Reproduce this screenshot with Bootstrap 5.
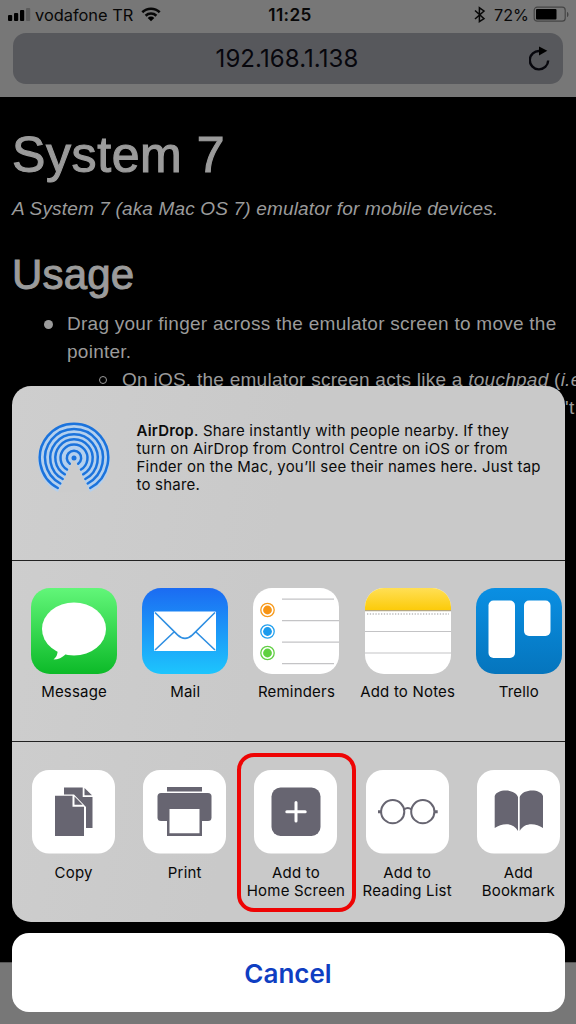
<!DOCTYPE html>
<html lang="en">
<head>
<meta charset="utf-8">
<meta name="viewport" content="width=device-width, initial-scale=1">
<title>System 7</title>
<link rel="stylesheet" href="https://cdn.jsdelivr.net/npm/bootstrap@5.3.0/dist/css/bootstrap.min.css">
<style>
  body { background: #777; font-family: Inter, sans-serif; color: #080808; }
  .phone { width: 576px; height: 1024px; background: #777; }
  .statusbar { height: 33px; font-size: 16.4px; line-height: 30px; padding: 0 6px 0 8px; }
  .statusbar > div { flex: 1 1 0; }
  .clock { font-weight: 600; font-size: 17.2px; letter-spacing: .35px; padding-left: 2px; }
  .percent { font-size: 16.2px; }
  .address { height: 51px; margin: 0 13px; border-radius: 13px; background: #57585c; color: #07070d; font-size: 24px; letter-spacing: .07px; padding-right: 12px; }
  .browser { height: 97px; }
  .doc { height: 865.5px; background: #000; color: #9b9b9b; font-family: "Liberation Sans", sans-serif; font-size: 19px; line-height: 28px; padding: 27.5px 0 0 12px; white-space: nowrap; border-bottom: 1px solid #555; }
  .doc h1 { font-size: 50px; line-height: 60px; font-weight: 400; -webkit-text-stroke: 1.1px #9b9b9b; letter-spacing: .6px; margin: 0; }
  .doc h2 { font-size: 42px; line-height: 50px; font-weight: 400; -webkit-text-stroke: 1px #9b9b9b; letter-spacing: .2px; margin: 27px 0 0; }
  .doc p { margin: 10px 0 0; font-style: italic; letter-spacing: .16px; }
  .doc ul { list-style: none; margin: 10.500px 0 0; padding: 0 0 0 55px; letter-spacing: .26px; }
  .doc ul ul { margin: 0; }
  .doc li { position: relative; }
  .doc li::before { content: ""; position: absolute; left: -23.500px; top: 9.5px; width: 9px; height: 9px; border-radius: 50%; background: #9b9b9b; }
  .doc ul ul li::before { background: none; border: 1.5px solid #9b9b9b; left: -23px; top: 10px; width: 8px; height: 8px; }
  .sheet-wrap { left: 11.5px; top: 386px; width: 553px; }
  .sheet { height: 536px; border-radius: 19px; background: linear-gradient(100deg, #cecece 0%, #c9c9c9 45%, #c9c9c9 100%); }
  .airdrop { height: 175px; border-bottom: 1.5px solid #222; padding: 35.5px 0 0 26px; gap: 27px; font-size: 15px; line-height: 18.2px; letter-spacing: .2px; color: #0b0b0b; white-space: nowrap; }
  .apps { height: 181px; border-bottom: 1.5px solid #222; padding: 26.5px 0 0 7px; }
  .actions { padding: 28px 0 0 6.5px; }
  .tile { flex: 0 0 111.2px; font-size: 15px; line-height: 18px; letter-spacing: .2px; text-align: center; white-space: nowrap; }
  .tile svg { display: block; margin: 0 auto 9.5px; }
  .cancel { height: 79px; margin-top: 11px; padding-top: 2px; border-radius: 17px; background: #fff; color: #0f3ec2; font-size: 26px; font-weight: 600; }
  .highlight { left: 225.5px; top: 367px; width: 119px; height: 159px; border: 4px solid #ee0404; border-radius: 17px; }
</style>
</head>
<body>
<div class="phone position-relative overflow-hidden">
  <header class="browser">
    <div class="statusbar d-flex">
      <div class="d-flex align-items-start">
        <svg width="23" height="30" viewBox="0 0 23 30"><rect x="0" y="15" width="4.2" height="6" rx="1"/><rect x="6" y="13" width="4.2" height="8" rx="1"/><rect x="12" y="10" width="4.2" height="11" rx="1"/><rect x="18" y="8" width="4.2" height="13" rx="1" fill="#5c5c5c"/></svg>
        <span class="ms-1">vodafone TR</span>
        <svg class="ms-2" width="21" height="30" viewBox="0 0 21 30"><g fill="none" stroke="#080808" stroke-width="2.6"><path d="M1.3 12.2a12.6 12.6 0 0 1 17.4 0"/><path d="M4.6 15.7a7.9 7.9 0 0 1 10.8 0"/></g><path d="M6.7 17.9a4.7 4.7 0 0 1 6.6 0L10 21.2z"/></svg>
      </div>
      <div class="clock text-center">11:25</div>
      <div class="d-flex justify-content-end">
        <svg width="12" height="30" viewBox="0 0 12 30"><path d="M1 10.5l9 8.2-4.6 3V7.800l4.6 3.200L1 19" fill="none" stroke="#080808" stroke-width="1.500"/></svg>
        <span class="percent ms-2">72%</span>
        <svg class="ms-1" width="37" height="30" viewBox="0 0 37 30"><rect x="1.2" y="7.2" width="31" height="14" rx="3" fill="none" stroke="#454545" stroke-width="1.2"/><rect x="3" y="9" width="20.5" height="10.5" rx="1"/><path d="M34 12c2 .5 2 4.500 0 5z" fill="#444"/></svg>
      </div>
    </div>
    <div class="address d-flex align-items-center">
      <div class="flex-fill text-center ps-4 ms-2">192.168.1.138</div>
      <svg width="22" height="30" viewBox="0 0 22 30"><g transform="translate(-.5 2)"><path d="M19.700 14.500a9.200 9.200 0 1 1-8.700-9.500h2" fill="none" stroke="#07070d" stroke-width="2.400"/><path d="M10.500.500l8.300 4.300-8.300 4.600z"/></g></svg>
    </div>
  </header>

  <main class="doc overflow-hidden">
    <h1>System 7</h1>
    <p>A System 7 (aka Mac OS 7) emulator for mobile devices.</p>
    <h2>Usage</h2>
    <ul>
      <li>Drag your finger across the emulator screen to move the<br>pointer.
        <ul>
          <li>On iOS, the emulator screen acts like a <i>touchpad</i> (<i>i.e.</i><br><span class="d-block" style="padding-left:443px">'t</span></li>
        </ul>
      </li>
    </ul>
  </main>

  <div class="sheet-wrap position-absolute">
    <section class="sheet overflow-hidden">
      <div class="airdrop d-flex align-items-start">
        <svg width="72" height="70" viewBox="-36 -36 72 70">
          <path d="M0 0L-16 34A36 36 0 1 1 16 34Z" fill="#b4d0ee"/>
          <g fill="none" stroke="#1b73dc" stroke-width="2.500" stroke-linecap="round">
            <path d="M-16.200 30A34.200 34.200 0 1 1 16.200 30"/><path d="M-13.700 25.500A29 29 0 1 1 13.700 25.500"/><path d="M-11.300 21A23.800 23.800 0 1 1 11.300 21"/><path d="M-9.200 16.300A18.700 18.700 0 1 1 9.200 16.300"/><path d="M-7 11.500A13.500 13.500 0 1 1 7 11.500"/><path d="M-4.200 5.800A7.200 7.200 0 1 1 4.200 5.800"/>
          </g>
          <path d="M0 3.500L-15 34H15Z" fill="#cccccc"/><circle r="2.500" fill="#1b73dc"/>
        </svg>
        <div>
          <b class="fw-semibold">AirDrop</b>. Share instantly with people nearby. If they<br>
          turn on AirDrop from Control Centre on iOS or from<br>
          Finder on the Mac, you’ll see their names here. Just tap<br>
          to share.
        </div>
      </div>

      <div class="apps d-flex">
        <div class="tile">
          <svg width="86" height="86" viewBox="0 0 86 86"><defs><linearGradient id="gm" x2="0" y2="1"><stop stop-color="#62f679"/><stop offset="1" stop-color="#0cba28"/></linearGradient></defs><rect width="86" height="86" rx="19" fill="url(#gm)"/><ellipse cx="43" cy="41" rx="32" ry="26.500" fill="#fff"/><path d="M26.500 61c.5 5-1 8-4 10.500 5 0 8.500-2 12-5z" fill="#fff"/></svg>Message
        </div>
        <div class="tile">
          <svg width="86" height="86" viewBox="0 0 86 86"><defs><linearGradient id="gl" x2="0" y2="1"><stop stop-color="#1b6bf2"/><stop offset="1" stop-color="#1dc5fd"/></linearGradient></defs><rect width="86" height="86" rx="19" fill="url(#gl)"/><rect x="12" y="23.500" width="62" height="39.500" rx="1" fill="#fff"/><path d="M13 24.500l22.500 22.300q7.500 7 15 0L73 24.500M13 62l19-18M73 62L54 44" fill="none" stroke="#2f8fe2" stroke-width="1.600"/></svg>Mail
        </div>
        <div class="tile">
          <svg width="86" height="86" viewBox="0 0 86 86"><rect width="86" height="86" rx="19" fill="#fff"/><path d="M29 11.200h52M29 32.700h57M29 54.200h57M29 75.700h52" stroke="#c4c4c6" stroke-width="1.300"/><g fill="none" stroke-width="1.300"><circle cx="14.500" cy="22" r="6.700" stroke="#f79a1b"/><circle cx="14.500" cy="43.500" r="6.700" stroke="#22a0ee"/><circle cx="14.500" cy="65" r="6.700" stroke="#62cf45"/></g><circle cx="14.500" cy="22" r="4.400" fill="#f79413"/><circle cx="14.500" cy="43.500" r="4.400" fill="#1b9bed"/><circle cx="14.500" cy="65" r="4.400" fill="#5fd140"/></svg>Reminders
        </div>
        <div class="tile">
          <svg width="86" height="86" viewBox="0 0 86 86"><defs><linearGradient id="gn" x2="0" y2="1"><stop stop-color="#ffdf55"/><stop offset="1" stop-color="#fccb0a"/></linearGradient><clipPath id="cn"><rect width="86" height="86" rx="19"/></clipPath></defs><g clip-path="url(#cn)"><rect width="86" height="86" fill="#fff"/><rect width="86" height="22" fill="url(#gn)"/><path d="M0 22.600h86" stroke="#b5a780" stroke-width="1.200"/><path d="M2 26h82" stroke="#bbb" stroke-width="1.300" stroke-dasharray="1.300 1.500"/><path d="M0 43.500h86M0 65h86" stroke="#c3c3c5" stroke-width="1.200"/></g></svg>Add to Notes
        </div>
        <div class="tile">
          <svg width="86" height="86" viewBox="0 0 86 86"><defs><linearGradient id="gt" x2="0" y2="1"><stop stop-color="#0a8fe3"/><stop offset="1" stop-color="#0575bd"/></linearGradient></defs><rect width="86" height="86" rx="19" fill="url(#gt)"/><rect x="12.500" y="12.500" width="26.500" height="57.500" rx="5" fill="#fff"/><rect x="48" y="12.500" width="26.500" height="35.500" rx="5" fill="#fff"/></svg>Trello
        </div>
      </div>

      <div class="actions d-flex">
        <div class="tile">
          <svg width="83" height="84" viewBox="0 0 83 84"><rect width="83" height="83.500" rx="17" fill="#fff"/><g fill="#676571"><path d="M32 17.500h18.700v9.500h9.800v31H32z"/><path d="M52.500 18l7.500 7.300h-7.500z"/></g><path d="M22 24.500h20L54 37v31H22z" fill="#fff"/><path d="M23 25.800h17.500v11H52V66H23z" fill="#676571"/><path d="M42.500 26.500l8.200 8.300h-8.200z" fill="#676571"/></svg>Copy
        </div>
        <div class="tile">
          <svg width="83" height="84" viewBox="0 0 83 84"><rect width="83" height="83.500" rx="17" fill="#fff"/><g fill="#676571"><rect x="24" y="17" width="35" height="4.500"/><rect x="14.500" y="23" width="54" height="28" rx="3.500"/><path d="M24 40h35v26H24z"/></g><path d="M26.500 39h30v24.200h-30z" fill="#fff"/></svg>Print
        </div>
        <div class="tile">
          <svg width="83" height="84" viewBox="0 0 83 84"><rect width="83" height="83.500" rx="17" fill="#fff"/><rect x="17.500" y="17.500" width="49" height="48.500" rx="9" fill="#676571"/><path d="M32.800 41.700h18.400M42 32.500v18.400" stroke="#fff" stroke-width="3" stroke-linecap="round"/></svg>Add to<br>Home Screen
        </div>
        <div class="tile">
          <svg width="83" height="84" viewBox="0 0 83 84"><rect width="83" height="83.500" rx="17" fill="#fff"/><g fill="none" stroke="#676571" stroke-width="2"><circle cx="26.700" cy="41.700" r="11.600"/><circle cx="56.800" cy="41.700" r="11.600"/><path d="M38 39.500q3.800-3 7.500 0"/><path d="M12 41.700h3M68.500 41.700h3.200" stroke-width="3"/></g></svg>Add to<br>Reading List
        </div>
        <div class="tile">
          <svg width="83" height="84" viewBox="0 0 83 84"><rect width="83" height="83.500" rx="17" fill="#fff"/><path d="M17.700 26C20 18.500 38 18.500 41 27V61C36 52 25 53 17.700 58ZM66 26C63.700 18.500 45.700 18.500 42.700 27V61C47.700 52 58.700 53 66 58Z" fill="#676571"/></svg>Add<br>Bookmark
        </div>
      </div>
    </section>
    <div class="cancel d-flex align-items-center justify-content-center">Cancel</div>
    <div class="highlight position-absolute"></div>
  </div>
</div>
<script src="https://cdn.jsdelivr.net/npm/bootstrap@5.3.0/dist/js/bootstrap.bundle.min.js"></script>
</body>
</html>
